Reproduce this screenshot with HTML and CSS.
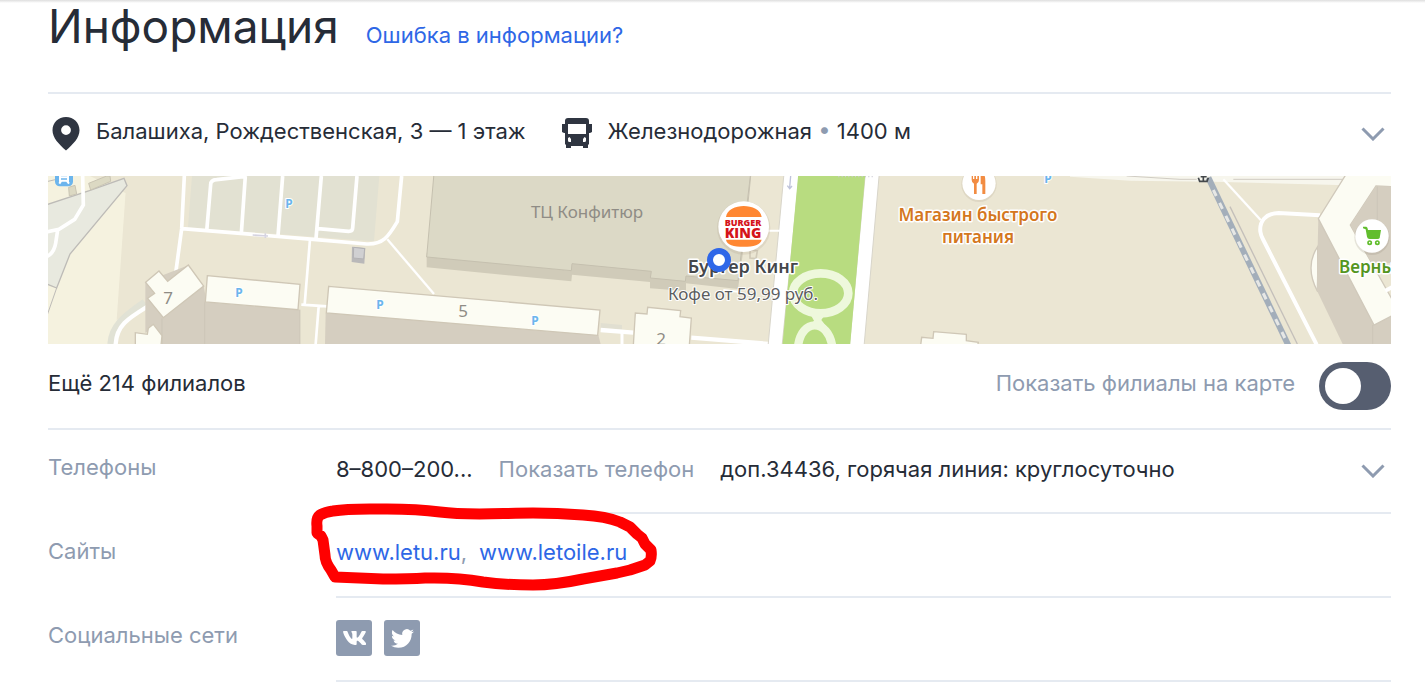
FILE: index.html
```html
<!DOCTYPE html>
<html lang="ru">
<head>
<meta charset="utf-8">
<title>Информация</title>
<link rel="stylesheet" href="styles.css">
</head>
<body>
<main class="page">
  <header class="head">
    <h1 class="title">Информация</h1>
    <a class="link" href="#report">Ошибка в информации?</a>
  </header>

  <section class="address">
    <svg class="icon-pin" viewBox="0 0 36 36" aria-hidden="true"><path fill-rule="evenodd" d="M18 2C10.300 2 4.500 7.700 4.500 15.200C4.500 23 11 29 18 35.500C25 29 31.500 23 31.500 15.200C31.500 7.700 25.700 2 18 2ZM18 10.200A4.900 4.900 0 1 1 18 20A4.900 4.900 0 0 1 18 10.200Z"/></svg>
    <span class="place">Балашиха, Рождественская, 3 — 1 этаж</span>
    <svg class="icon-bus" viewBox="0 0 30 30" aria-hidden="true"><path fill-rule="evenodd" d="M6 0H24Q27 0 27 3V6H30V14L28 15H27V26L26 27V30H21V28H9V30H4V27L3 26V15H2L0 14V6H3V3Q3 0 6 0ZM6 6V16H24V6ZM6 20V22.500Q6 24 7.500 24H9V21L7.500 19ZM24 20L22.500 19L21 21V24H22.500Q24 24 24 22.500Z"/></svg>
    <span class="station">Железнодорожная <span class="dot">•</span> 1400 м</span>
    <button class="expand" type="button" aria-label="Развернуть адрес"><svg viewBox="0 0 24 14" aria-hidden="true"><path d="M1.500 1.500L12 12L22.500 1.500"/></svg></button>
  </section>

  <svg class="map" viewBox="0 0 1343 168" preserveAspectRatio="xMidYMid slice" role="img" aria-label="Карта">
    <rect width="1343" height="168" fill="#ebe6d3"/>
    <g transform="translate(-8 -6) scale(.33333)">
      <path fill="#f5f2df" d="M24 18H150L258 70L228 522H24Z"/>
      <path fill="#ebe6d3" d="M262 18H440L400 310L330 380L230 450L256 80Z"/>
      <path fill="#e8e9df" stroke="#bdbbb7" stroke-width="4" d="M20 104L148 62L252 25L261 47L90 252L50 354L20 342"/>
      <path fill="none" stroke="#bdbbb7" stroke-width="3" d="M50 354L22 434M24 34L50 28"/>
      <path fill="#dcd9c3" stroke="#c9c4b3" stroke-width="3" d="M146 40L200 18H210L212 34L152 60ZM86 52L105 46L110 72L88 78Z"/>
      <path fill="none" stroke="#fff" stroke-width="11" d="M128 18L130 105L104 148L57 178L20 186M53 180L47 220Q42 250 20 260"/>
      <path fill="#e2e1d2" d="M456 18H1018L1002 214L444 172Z"/>
      <g fill="none" stroke="#fff" stroke-width="11" stroke-linejoin="round">
        <path d="M433 18L425 176L407 310M426 176L820 208L980 222C1030 224 1045 200 1072 155L1085 18"/>
        <path d="M500 184L512 44Q512 30 530 29L616 19M616 18L604 190M728 18L714 198M844 18L828 206M834 176L926 184Q938 184 938 174L951 18"/>
        <path d="M810 208L794 404M784 404L862 409M836 409L827 522" stroke-width="8"/>
        <path d="M1042 208L1182 372" stroke-width="7"/>
      </g>
      <path fill="none" stroke="#d5d3e0" stroke-width="5" d="M638 195L684 198M676 190V204"/>
      <path fill="none" stroke="#e1e2d5" stroke-width="20" d="M212 522C215 470 250 440 314 396"/>
      <path fill="none" stroke="#fff" stroke-width="13" d="M227 522C230 465 265 445 325 408"/>
      <path fill="#b9b8b9" d="M936 230L976 234L973 281L935 276Z"/><path fill="#d0d0d2" stroke="#b3b2b4" stroke-width="3" d="M941 232L974 236L971 267L940 264Z"/>
      <path fill="#d5cec0" d="M316 336L445 286L491 348L500 397L780 419V522H366L340 480L316 488ZM860 429H1150V522H859Z"/>
      <path fill="none" stroke="#c9c1b3" stroke-width="2" d="M366 445V522M494 397V522M780 419V522"/>
      <g fill="#fcfcf3" stroke="#cfc7b6" stroke-width="4">
        <path d="M317 337L357 303L383 334L445 285L491 348L370 443L323 385L344 370Z"/>
        <path d="M502 317L780 343L774 419L496 396Z"/>
        <path d="M286 526V488L322 493L325 475L340 463L366 497L363 526Z"/>
      </g>
      <rect x="45" y="-10" width="54" height="59" rx="14" fill="#6cb5ed"/>
      <path fill="none" stroke="#fff" stroke-width="6" d="M60 14V32H84V14M60 22H84M64 32L58 41M80 32L87 41"/>
    </g>
    <g transform="translate(362 -6) scale(.33333)">
      <path fill="#d0cbb9" d="M50 250L50 292L484 334L486 314L720 336V355L828 363V340L984 357L1000 240Z"/>
      <path fill="#dcd9c6" stroke="#c5c0af" stroke-width="3" d="M72 10L50 261L484 302L486 281L724 304L721 324L826 334L828 318L984 332L1022 10Z"/>
      <path fill="#d5cec0" d="M-253 430L565 495L572 522H-255Z"/>
      <path fill="#fcfcf3" stroke="#cfc7b6" stroke-width="4" d="M-244 349L570 420L563 496L-251 429Z"/>
      <path fill="#e1dfd1" d="M572 459L636 465V478L572 474Z"/>
      <path fill="none" stroke="#fff" stroke-width="13" d="M572 480L670 488M844 503L1105 524"/><path stroke="#fff" stroke-width="9" d="M636 486V522"/>
      <path fill="#fcfcf3" stroke="#cfc7b6" stroke-width="4" d="M670 526L676 429L711 432L713 412L812 422L810 440L844 444L838 526Z"/>
    </g>
    <g transform="translate(602 -6) scale(.33333)">
      <path fill="none" stroke="#c7c2b2" stroke-width="3" d="M302 18L292 120"/>
      <path fill="none" stroke="#d1cab8" stroke-width="5" d="M300 240L322 242L318 266L300 264Z"/>
      <path fill="#fff" stroke="#d8d5ca" stroke-width="3" d="M402 10H448L396 530H354ZM646 10H688L642 530H598Z"/>
      <path fill="#b8dc80" d="M445 10H646L600 530H397Z"/>
      <path stroke="#cbcad2" stroke-width="4" stroke-dasharray="3 7" d="M565 20H675"/>
      <path fill="none" stroke="#bfc3da" stroke-width="4" d="M422 18L419 52M412 47L419 56L426 48"/>
      <path fill="none" stroke="#fff" stroke-width="6" d="M352 182H390M220 360L270 366"/>
      <ellipse cx="512" cy="370" rx="83" ry="60" fill="none" stroke="#eef8dc" stroke-width="26"/>
      <path fill="none" stroke="#eef8dc" stroke-width="25" d="M444 530C453 445 535 445 547 530"/>
      <path fill="#eef8dc" d="M484 438H522L514 450L530 470H478L492 452Z"/>
      <circle cx="281" cy="174" r="80" fill="#a99d87" opacity=".2"/>
      <circle cx="281" cy="170" r="76" fill="#fff"/>
      <path fill="#ff8732" d="M228 141C230 119 257 108 281 108C306 108 333 119 335 141ZM228 209H335C332 225 311 230 281 230C251 230 230 225 228 209Z"/>
    </g>
    <g transform="translate(812 -6) scale(.33333)">
      <circle cx="357" cy="43" r="53" fill="#a99d87" opacity=".2"/>
      <circle cx="357" cy="40" r="50" fill="#fff"/>
      <path fill="#f28c42" d="M335 10H339V27H343V10H348V27H352V10H357V29Q357 38 350 41V72H342V41Q335 38 335 29ZM362 10H369Q376 15 376 33V72H367V43H362Z"/>
      <path fill="#fcfcf3" stroke="#cfc7b6" stroke-width="4" d="M182 526L185 502L219 505L221 485L319 493V512L355 517L353 526Z"/>
    </g>
    <g transform="translate(1082 -6) scale(.33333)">
      <path fill="#f7f6ed" d="M-180 18H650V46L250 35L0 32L-180 20Z"/>
      <path fill="none" stroke="#d0ccc3" stroke-width="3" d="M-10 18L150 28H200M310 28H650"/>
      <path fill="none" stroke="#fff" stroke-width="7" d="M280 28L392 150"/>
      <path fill="none" stroke="#fff" stroke-width="12" d="M570 136L446 129C405 130 388 155 391 185Q392 195 400 210L560 524"/>
      <path stroke="#c4bfba" stroke-width="4" d="M300 110L502 522"/>
      <path stroke="#a3aeba" stroke-width="18" d="M235 23L477 530"/><path stroke="#e6e7e5" stroke-width="9" stroke-dasharray="20 23" d="M250 60L477 530"/>
      <path fill="#fcfcf3" stroke="#d0c9bb" stroke-width="4" d="M563 230Q523 290 563 365Z"/>
      <path fill="#d5cec0" d="M565 146L785 430V526H640L560 360Z"/>
      <path fill="#fcfcf3" stroke="#d0c9bb" stroke-width="4" d="M650 10H790V50L738 48L661 165L790 395V435L732 465L565 146Z"/>
      <path fill="#d5cec0" d="M738 48L790 50V280H725L661 165Z"/>
      <path fill="none" stroke="#c9c1b3" stroke-width="2" d="M742 50V155M728 465V522"/>
      <path fill="none" stroke="#fff" stroke-width="12" d="M766 362L790 350"/>
      <circle cx="726" cy="202" r="53" fill="#8d8271" opacity=".2"/><circle cx="726" cy="198" r="50" fill="#fff"/>
      <path fill="#61bd2d" d="M699 170H709Q713 171 714 180H753L749 204Q748 207 742 207H719Q712 207 711 200L707 178L699 175Z"/>
      <g fill="#fff" stroke="#61bd2d" stroke-width="5"><circle cx="719" cy="218" r="5"/><circle cx="742" cy="218" r="5"/></g>
      <path fill="none" stroke="#44484b" stroke-width="5" d="M220 12V35M203 15H238M205 23L209 34H231L235 23M212 20H230"/>
    </g>
    <g class="map-text">
      <g class="parking"><text x="241" y="32">P</text><text x="191" y="121">P</text><text x="332" y="133">P</text><text x="487" y="149">P</text><text x="1000" y="7">P</text></g>
      <g class="number"><text x="120" y="128">7</text><text x="415" y="141">5</text><text x="613" y="169">2</text><text x="539" y="42">ТЦ Конфитюр</text></g>
      <g class="brand"><text class="brand-top" x="695" y="50">BURGER</text><text class="brand-bottom" x="695" y="62">KING</text></g>
      <text class="poi" x="695" y="97">Бургер Кинг</text>
      <text class="poi-note" x="695" y="124">Кофе от 59,99 руб.</text>
      <g class="food"><text x="930" y="45">Магазин быстрого</text><text x="930" y="67">питания</text></g>
      <text class="shop" x="1291" y="97">Верный</text>
    </g>
    <circle cx="671" cy="84" r="9" fill="#fff" stroke="#2f67e8" stroke-width="6"/>
  </svg>

  <section class="branches">
    <span class="raised">Ещё 214 филиалов</span>
    <label class="toggle"><span class="raised">Показать филиалы на карте</span><input class="switch" type="checkbox" role="switch"></label>
  </section>

  <dl class="details">
    <div class="row">
      <dt class="label">Телефоны</dt>
      <dd class="value phones">
        <span>8–800–200...</span>
        <button class="show" type="button">Показать телефон</button>
        <span>доп.34436, горячая линия: круглосуточно</span>
        <button class="expand" type="button" aria-label="Развернуть телефоны"><svg viewBox="0 0 24 14" aria-hidden="true"><path d="M1.500 1.500L12 12L22.500 1.500"/></svg></button>
      </dd>
    </div>
    <div class="row">
      <dt class="label">Сайты</dt>
      <dd class="value sites">
        <span class="comma"><a class="link" href="#letu">www.letu.ru</a>,</span>
        <a class="link" href="#letoile">www.letoile.ru</a>
        <svg class="mark" viewBox="306 500 360 96" aria-hidden="true"><path d="M333 511C350 508 370 509 387 509C410 509 425 510 440 512C470 516 500 513 533 513C553 513 570 514 583 515C600 516 610 518 620 522L630 527L637 534L642 538L645 544L651 550Q652 557 650 561L645 565L630 570L617 573L583 579Q555 585 533 585C505 585 490 583 483 582C455 577 440 578 425 578C410 579 395 579 383 579L335 577L331 570Q325 562 325 555L323 540L321 536L317 533V526Q316 518 320 515Q325 512 333 511Z"/></svg>
      </dd>
    </div>
    <div class="row">
      <dt class="label">Социальные сети</dt>
      <dd class="value socials">
        <a class="social" href="#vk" aria-label="ВКонтакте"><svg class="icon-vk" viewBox="16 94 534 324" aria-hidden="true"><path d="M545 117.700c3.700-12.500 0-21.700-17.800-21.700h-58.900c-15 0-21.900 7.900-25.600 16.700 0 0-30 73.100-72.400 120.500-13.700 13.700-20 18.100-27.500 18.100-3.700 0-9.400-4.400-9.400-16.900V117.700c0-15-4.200-21.700-16.600-21.700h-92.600c-9.400 0-15 7-15 13.500 0 14.200 21.200 17.500 23.400 57.500v86.800c0 19-3.400 22.500-10.900 22.500-20 0-68.600-73.400-97.400-157.400-5.800-16.300-11.500-22.900-26.600-22.900H38.800c-16.800 0-20.200 7.900-20.200 16.700 0 15.600 20 93.100 93.100 195.500C160.400 378.100 229 416 291.400 416c37.500 0 42.100-8.400 42.100-22.900 0-66.800-3.400-73.100 15.400-73.100 8.700 0 23.700 4.400 58.700 38.100 40 40 46.600 57.900 69 57.900h58.900c16.800 0 25.300-8.400 20.400-25-11.200-34.900-86.900-106.700-90.300-111.500-8.700-11.200-6.200-16.200 0-26.200.1-.1 72-101.300 79.400-135.600z"/></svg></a>
        <a class="social" href="#twitter" aria-label="Twitter"><svg class="icon-twitter" viewBox="0 0 24 24" aria-hidden="true"><path d="M23.953 4.570a10 10 0 01-2.825.775 4.958 4.958 0 002.163-2.723c-.951.555-2.005.959-3.127 1.184a4.920 4.920 0 00-8.384 4.482C7.690 8.095 4.067 6.130 1.640 3.162a4.822 4.822 0 00-.666 2.475c0 1.710.870 3.213 2.188 4.096a4.904 4.904 0 01-2.228-.616v.060a4.923 4.923 0 003.946 4.827 4.996 4.996 0 01-2.212.085 4.936 4.936 0 004.604 3.417 9.867 9.867 0 01-6.102 2.105c-.390 0-.779-.023-1.170-.067a13.995 13.995 0 007.557 2.209c9.053 0 13.998-7.496 13.998-13.985 0-.210 0-.420-.015-.630A9.935 9.935 0 0024 4.590z"/></svg></a>
      </dd>
    </div>
  </dl>
</main>
</body>
</html>
```
FILE: styles.css
```css
* { box-sizing: border-box; }
body {
  margin: 0;
  overflow: hidden;
  background: #fff;
  color: #262c37;
  font: 22px/28px Inter, "Liberation Sans", sans-serif;
}
.page {
  padding: 0 34px 0 48px;
  background: linear-gradient(#dedede, #fff 3px);
}
button { padding: 0; border: 0; background: none; font: inherit; cursor: pointer; }
.link { color: #2e67e6; text-decoration: none; }

.head {
  display: flex;
  align-items: baseline;
  gap: 27px;
  height: 94px;
  border-bottom: 2px solid #e5eaf1;
}
.title { margin: 0; font-size: 46px; font-weight: 400; line-height: 52px; }

.address { display: flex; align-items: center; height: 82px; padding-bottom: 4px; }
.icon-pin { width: 36px; height: 36px; margin-right: 12px; fill: #2f3541; }
.icon-bus { width: 30px; height: 30px; margin-right: 16px; fill: #2f3541; }
.place { margin-right: 36px; padding-bottom: 4px; }
.station { padding-bottom: 4px; }
.dot { color: #8e9bb0; }
.expand { display: flex; margin-left: auto; padding: 6px; }
.address .expand { padding-top: 8px; }
.expand svg { width: 24px; height: 14px; fill: none; stroke: #8e9bb0; stroke-width: 3; }

.map { display: block; width: 100%; height: 168px; }
.map-text { font-family: "Noto Sans", sans-serif; text-anchor: middle; paint-order: stroke; stroke-linejoin: round; }
.parking { font-size: 12px; font-weight: 700; fill: #6cb5ed; stroke: #fff; stroke-width: 2px; }
.number { font-size: 17px; fill: #8f8c85; }
.brand { font-family: "Open Sans", sans-serif; font-weight: 800; fill: #d5141a; }
.brand-top { font-size: 9px; }
.brand-bottom { font-size: 14px; }
.poi, .food, .shop { font-size: 17px; font-weight: 600; stroke: #fff; stroke-width: 3px; }
.poi { font-size: 18px; fill: #45474b; }
.poi-note { font-size: 17px; fill: #5c5d60; stroke: #fff; stroke-width: 2px; }
.food { fill: #d47720; }
.shop { fill: #55961f; text-anchor: start; }

.branches {
  display: flex;
  justify-content: space-between;
  align-items: center;
  height: 86px;
  border-bottom: 2px solid #e5eaf1;
}
.raised { padding-bottom: 6px; }
.toggle { display: flex; align-items: center; gap: 24px; color: #8e9bb0; }
.switch {
  appearance: none;
  width: 72px;
  height: 48px;
  margin: 0;
  padding: 6px;
  border-radius: 24px;
  background: #565e70;
}
.switch::before { content: ""; display: block; width: 36px; height: 36px; border-radius: 50%; background: #fff; }
.switch:checked::before { margin-left: auto; }

.details { margin: 0; }
.row { display: grid; grid-template-columns: 288px 1fr; height: 84px; }
.label { padding-top: 23px; color: #8e9bb0; }
.value {
  position: relative;
  display: flex;
  align-items: center;
  gap: 26px;
  margin: 0;
  border-bottom: 2px solid #e5eaf1;
}
.phones { padding-bottom: 4px; }
.phones .expand { padding-top: 10px; }
.show { color: #8e9bb0; }
.sites { gap: 12px; padding-bottom: 7px; }
.comma { color: #8e9bb0; }
.mark {
  position: absolute;
  left: -30px;
  top: -14px;
  width: 360px;
  height: 96px;
  fill: none;
  stroke: #f00;
  stroke-width: 11;
  stroke-linejoin: round;
  pointer-events: none;
}
.socials { gap: 12px; padding-bottom: 2px; }
.social { display: grid; place-items: center; width: 36px; height: 36px; border-radius: 3px; background: #8e9bb0; fill: #fff; }
.icon-vk { width: 23px; height: 14px; }
.icon-twitter { width: 23px; height: 23px; }
```
